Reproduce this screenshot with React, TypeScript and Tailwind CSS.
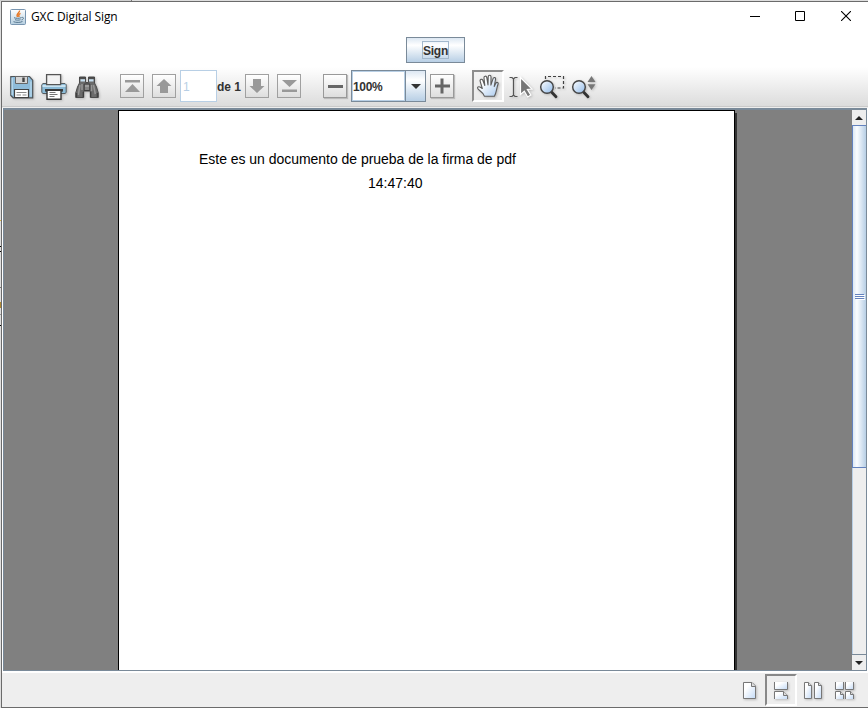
import type { ReactNode } from 'react';

function Icon({ children, size = 24, className = '' }: { children: ReactNode; size?: number; className?: string }) {
  return (
    <svg width={size} height={size} viewBox={`0 0 ${size} ${size}`} className={`block shrink-0 overflow-visible ${className}`} fill="none">
      {children}
    </svg>
  );
}

function SquareButton({ children, active = false, className = '' }: { children: ReactNode; active?: boolean; className?: string }) {
  return (
    <button
      className={`h-6 w-6 shrink-0 border bg-linear-to-b from-white to-[#dedede] ${active ? 'border-[#999] text-[#666] shadow-[1px_1px_1px_#bbb]' : 'border-[#a0a0a0] text-[#999]'} ${className}`}
    >
      <svg width="22" height="22" viewBox="0 0 22 22" className="block" fill="currentColor">{children}</svg>
    </button>
  );
}

function JavaIcon() {
  return (
    <Icon size={16} className="-mt-px">
      <defs>
        <linearGradient id="java" x2="0" y2="1">
          <stop stopColor="#fff" />
          <stop offset="1" stopColor="#b6cfe0" />
        </linearGradient>
      </defs>
      <rect x=".5" y=".5" width="15" height="15" rx="1" fill="url(#java)" stroke="#7895b0" />
      <path d="M9.5 1.5C10 4 5.5 4.5 7.5 8M10.5 4.3c-2.7 1.2-1.7 2-1.5 3.7" stroke="#e77724" strokeWidth="1.4" />
      <path d="M4 8.7c1.5.8 5.8.8 7.2 0M5 10.7c1.5.6 4 .6 5.5 0M3.5 12.7c2 1 7.5 1 9-.3M11.5 8.5c3-.6 2.2 2 0 2.4" stroke="#55768f" />
    </Icon>
  );
}

function SaveIcon() {
  return (
    <Icon className="mt-px drop-shadow-[1px_1px_1px_#bbb]">
      <path d="M.8 1.5h18.7l3.2 3.7v17.6H3.2L.8 20.5Z" fill="#8ebbd9" stroke="#505558" strokeWidth="1.2" />
      <path d="M2.2 3v17M21 6.5v15" stroke="#b9d9ed" strokeWidth="1.3" />
      <path d="M5.5 1.5h12v7h-12Z" fill="#d4d4d4" stroke="#666" />
      <path d="M12.3 2.5h2.4v4.5h-2.4Z" fill="#414141" />
      <path d="M4.5 14.5h14v8h-14Z" fill="#fff" stroke="#414141" strokeWidth="1.2" />
      <path d="M6.5 17.5h10M6.5 20h4.5m1.5 0h4" stroke="#888" />
    </Icon>
  );
}

function PrintIcon() {
  return (
    <Icon size={26} className="mt-px drop-shadow-[1px_1px_1px_#bbb]">
      <path d="M2 9.5h22l1.2 1.2v7.8L24 19.5H2L.8 18.5v-7.8Z" fill="#8bbbd7" stroke="#555b5e" />
      <path d="M1.5 12h23" stroke="#c9e3f1" strokeWidth="2" />
      <path d="M5.6.7h14v10h-14Z" fill="#f2f2f2" stroke="#555" strokeWidth="1.3" />
      <path d="M4 15h18v2.6H4Z" fill="#3c3c3c" />
      <path d="M6 16.3h14v9H6Z" fill="#fff" stroke="#373737" strokeWidth="1.4" />
      <path d="M8.5 18.5h6M8.5 20.5h8M8.5 22.5h5" stroke="#777" />
    </Icon>
  );
}

function BinocularsIcon() {
  return (
    <Icon className="mt-px drop-shadow-[1px_1px_1px_#bbb]">
      <path d="M4.5 2h6v5.5h3V2h6v6l2 4 1.8 6v4.5h-8V16H8.7v6.5h-8V18l1.8-6 2-4Z" fill="#6b6b6b" stroke="#4b4b4b" />
      <path d="M4.5 3h6M13.5 3h6" stroke="#444" strokeWidth="1.6" />
      <path d="M5.5 5.3H10M14 5.3h4.5" stroke="#c7dff0" strokeWidth="2.2" />
      <path d="M5 10 3.3 20M7 9v6M18.5 10l1.8 9M16.5 10v6" stroke="#969696" strokeWidth="1.5" />
      <path d="M9.2 9h5.6v6.5H9.2Z" fill="#858585" stroke="#3d3d3d" />
      <path d="M10 11h4" stroke="#b5b5b5" />
      <path d="M1.7 18v4M8.3 17v5M15.7 17v5M22.3 18v4" stroke="#3d3d3d" strokeWidth="1.2" />
    </Icon>
  );
}

function HandIcon() {
  return (
    <Icon className="drop-shadow-[1px_1px_1px_#bbb]">
      <defs>
        <linearGradient id="hand" x2="1" y2="1">
          <stop offset=".3" stopColor="#fff" />
          <stop offset="1" stopColor="#a9caef" />
        </linearGradient>
      </defs>
      <path d="M8.5 22.3c-.8-2.5-3-4.5-5.1-6.1-1.4-1-2.3-2-1.6-3 .9-1.2 2.8 0 4.5 1.3L4.2 7.4C3.6 5.3 6 4.5 6.8 6.3l2 5.2L8 4c-.2-2.2 2.4-2.5 2.8-.4l1.2 7.3.2-8C12.3.7 15 .8 15 3l-.1 8.1L17 4.8c.7-2 3-1.4 2.5.7l-1.3 7 1.6-3.2c1-1.7 2.9-.8 2.2 1-1.5 4-1.5 8.4-3.6 12Z" fill="url(#hand)" stroke="#5c5c5c" strokeWidth="1.1" strokeLinejoin="round" />
    </Icon>
  );
}

function SelectIcon() {
  return (
    <Icon className="mt-px drop-shadow-[1px_1px_1px_#bbb]">
      <path d="M.5 2.5H3L4.5 4 6 2.5h2.5M4.5 4v16M.5 21.5H3L4.5 20 6 21.5h2.5" stroke="#555" strokeWidth="1.2" />
      <path d="M11.5 2.5 23 14l-4.6.4 3.5 5.7-3.2 1.9-3.4-5.8-3.8 3.2Z" fill="#777" stroke="#fff" strokeWidth="1.2" />
    </Icon>
  );
}

function ZoomIcon({ dynamic = false }: { dynamic?: boolean }) {
  return (
    <Icon className="mt-px drop-shadow-[1px_1px_1px_#bbb]">
      <defs>
        <linearGradient id="lens" x2="1" y2="1">
          <stop stopColor="#fff" />
          <stop offset="1" stopColor="#91bbea" />
        </linearGradient>
      </defs>
      {dynamic ? (
        <path d="m15.5 7 4-6 4 6ZM15.5 9.2l4 5.8 4-5.8Z" fill="#777" />
      ) : (
        <path d="M5.5 4V1.5h18v11.5H15" stroke="#414141" strokeWidth="1.2" strokeDasharray="3 2" />
      )}
      <path d="m11.5 17 4.5 4.8" stroke="#333" strokeWidth="2.8" strokeLinecap="round" />
      <circle cx="7" cy="12" r="6.3" fill="url(#lens)" stroke="#444" strokeWidth="1.4" />
    </Icon>
  );
}

function Sheet({ d, fold }: { d: string; fold?: string }) {
  return (
    <>
      <path d={d} fill="url(#sheet)" stroke="#777" />
      {fold && <path d={fold} fill="#ddd" stroke="#777" />}
    </>
  );
}

function PageIcon({ kind }: { kind: 'single' | 'column' | 'facing' | 'grid' }) {
  return (
    <Icon size={20} className="mt-0.5 drop-shadow-[1px_1px_1px_#bbb]">
      <defs>
        <linearGradient id="sheet" x2="1" y2="1">
          <stop offset=".3" stopColor="#fff" />
          <stop offset="1" stopColor="#c3daf6" />
        </linearGradient>
      </defs>
      {kind === 'single' && <Sheet d="M4.5 1.5h8.5l3.5 3.5v12.5h-12Z" fold="M12.5 1.5V5.5h4" />}
      {kind === 'column' && (
        <>
          <Sheet d="M3.5 1v7.5h13V1" />
          <Sheet d="M3.5 18v-7.5h9l4 4V18" fold="M12.5 10.5v4h4" />
        </>
      )}
      {kind === 'facing' && (
        <>
          <Sheet d="M1.5 1.5h4l3 3v13h-7Z" fold="M5.5 1.5v3h3" />
          <Sheet d="M11.5 1.5h4l3 3v13h-7Z" fold="M15.5 1.5v3h3" />
        </>
      )}
      {kind === 'grid' && (
        <>
          <Sheet d="M.5 1v7.5h8V1" />
          <Sheet d="M10.5 1v7.5h8V1" />
          <Sheet d="M.5 18v-7.5h5l3 3V18" fold="M5.5 10.5v3h3" />
          <Sheet d="M10.5 18v-7.5h5l3 3V18" fold="M15.5 10.5v3h3" />
        </>
      )}
    </Icon>
  );
}

function TitleBar() {
  return (
    <header className="flex h-[30px] shrink-0 items-center bg-white pl-2 pr-[17px]">
      <JavaIcon />
      <h1 className="ml-[5px] whitespace-nowrap font-['Open_Sans',sans-serif] text-[12px] leading-4 tracking-[-0.1px] text-black">GXC Digital Sign</h1>
      <div className="mb-0.5 ml-auto flex items-center text-black">
        <svg width="10" height="10" className="block"><path d="M0 5.5h10" stroke="currentColor" /></svg>
        <svg width="10" height="10" className="ml-[35px] block"><path d="M.5.5h9v9h-9Z" fill="none" stroke="currentColor" /></svg>
        <svg width="10" height="10" className="ml-9 block"><path d="m0 0 10 10M10 0 0 10" stroke="currentColor" strokeWidth="1.1" /></svg>
      </div>
    </header>
  );
}

function Toolbar() {
  return (
    <div className="flex h-[39px] shrink-0 items-center bg-linear-to-b from-white to-[#dcdcdc] pb-px pl-2 font-['Liberation_Sans',Arial,sans-serif] text-[12px] font-bold text-[#333]">
      <SaveIcon />
      <div className="ml-[7px]"><PrintIcon /></div>
      <div className="ml-2"><BinocularsIcon /></div>
      <SquareButton className="ml-[21px]"><path d="M4 5h15v2.5H4ZM11.5 9l7.5 8H4Z" /></SquareButton>
      <SquareButton className="ml-2"><path d="m11 4 7.5 7H15v7H7v-7H3.5Z" /></SquareButton>
      <div className="ml-1 flex h-8 w-[37px] shrink-0 items-center border border-[#b8cfe5] bg-white pl-0.5 pt-0.5 font-normal text-[#b8cfe5]">1</div>
      <span className="w-7 whitespace-nowrap pt-0.5">de 1</span>
      <SquareButton><path d="m11 18 7.5-7H15V4H7v7H3.5Z" /></SquareButton>
      <SquareButton className="ml-2"><path d="M4 5h15l-7.5 7ZM4 14.5h15V17H4Z" /></SquareButton>
      <SquareButton active className="ml-[22px]"><path d="M4 10h15v3H4Z" /></SquareButton>
      <div className="ml-1 flex h-8 w-[75px] shrink-0 border border-[#7a8a99] bg-white">
        <span className="flex flex-1 items-center border border-[#b8cfe5] pt-0.5 tracking-[-0.3px]">100%</span>
        <span className="flex w-5 items-center justify-center border-l border-[#7a8a99] bg-linear-to-b from-[#dde8f3] via-white via-30% to-[#b8cfe5]">
          <svg width="10" height="5" className="mt-px block"><path d="M0 0h10L5 5Z" fill="#333" /></svg>
        </span>
      </div>
      <SquareButton active className="ml-1"><path d="M9.5 3.5h3v6h6.5v3h-6.5v6h-3v-6H4v-3h5.5Z" /></SquareButton>
      <div className="ml-[18px] flex size-8 shrink-0 items-center justify-center border-2 border-b-white border-l-[#8e8e8e] border-r-white border-t-[#8e8e8e] bg-[#eeeeee]/60"><HandIcon /></div>
      <div className="ml-[5px]"><SelectIcon /></div>
      <div className="ml-[7px]"><ZoomIcon /></div>
      <div className="ml-2"><ZoomIcon dynamic /></div>
    </div>
  );
}

function ScrollArrow({ down = false }: { down?: boolean }) {
  return (
    <button className="flex h-[15px] w-full shrink-0 items-center justify-center bg-[#eee]">
      <svg width="8" height="4" className="block"><path d={down ? 'M0 0h8L4 4Z' : 'M0 4h8L4 0Z'} fill="#222" /></svg>
    </button>
  );
}

function ScrollBar() {
  return (
    <aside className="flex w-[15px] shrink-0 flex-col border-r border-[#7a8a99] bg-[#eee]">
      <ScrollArrow />
      <div className="flex min-h-0 flex-1 flex-col border-l border-[#b8cfe5]">
        <div className="-ml-px flex h-[343px] shrink-0 items-center justify-center border border-r-0 border-[#6382bf] bg-linear-to-r from-[#dce8f4] via-[#fafcff] via-30% to-[#b8cfe5]">
          <div className="flex flex-col gap-px">
            <i className="h-px w-[9px] bg-[#6382bf] shadow-[1px_1px_0_white]" />
            <i className="h-px w-[9px] bg-[#6382bf] shadow-[1px_1px_0_white]" />
            <i className="h-px w-[9px] bg-[#6382bf] shadow-[1px_1px_0_white]" />
          </div>
        </div>
      </div>
      <div className="border-t border-[#7a8a99]"><ScrollArrow down /></div>
    </aside>
  );
}

/* Sliver of the desktop that stays visible beside the window. */
function DesktopEdge() {
  return (
    <div className="flex w-px shrink-0 flex-col pt-[219px]">
      <i className="h-px bg-[#d8b43c]" />
      <i className="mt-[25px] h-px bg-black" />
      <i className="mt-1 h-px bg-black" />
      <i className="mt-[35px] h-px bg-[#777]" />
      <i className="mt-[14px] h-1.5 bg-[#b08a35]" />
      <i className="mt-[6px] h-px bg-[#999]" />
      <i className="mt-[10px] h-px bg-black" />
    </div>
  );
}

export default function App() {
  return (
    <div className="flex h-[708px] w-[868px] flex-col overflow-hidden bg-[#dedede]">
      <div className="flex h-px shrink-0">
        <i className="w-[131px] bg-[#cfcfcf]" />
        <i className="w-px bg-[#777]" />
      </div>
      <div className="flex min-h-0 flex-1">
        <DesktopEdge />
        <main className="flex min-w-0 flex-1 flex-col border-b border-l border-t border-[#6b6b6b] bg-white">
          <TitleBar />
          <div className="flex h-[35px] shrink-0 items-start pl-[404px] pt-[5px]">
            <button className="flex h-[26px] w-[59px] items-center justify-center border border-[#7a8a99] bg-linear-to-b from-[#dce7f2] via-white via-30% to-[#b8cfe5] font-['Liberation_Sans',Arial,sans-serif] text-[12px] font-bold leading-4 text-[#333]">
              <span className="flex h-[18px] w-[27px] items-center justify-center border border-[#a3b8cc] pt-0.5 tracking-[-0.2px]">Sign</span>
            </button>
          </div>
          <Toolbar />
          <div className="h-0.5 shrink-0 border-t border-[#c9c9c9] bg-[#eee]" />
          <div className="ml-px mr-px flex h-[563px] shrink-0 border-b border-l border-t-2 border-[#7a8a99] bg-[#808080]">
            <div className="flex min-w-0 flex-1 overflow-hidden pl-[114px]">
              <article className="h-full w-[617px] shrink-0 border-x border-t border-black bg-white pl-20 pt-[38px] font-['Liberation_Sans',Arial,sans-serif] text-[14px] leading-5 text-black shadow-[2px_3px_0_#333]">
                <p className="whitespace-nowrap tracking-[-0.03px]">Este es un documento de prueba de la firma de pdf</p>
                <p className="ml-[169px] mt-1">14:47:40</p>
              </article>
            </div>
            <ScrollBar />
          </div>
          <footer className="mt-0.5 flex min-h-0 flex-1 items-center bg-[#eee] pl-[737px]">
            <PageIcon kind="single" />
            <div className="ml-[6px] flex size-8 items-center justify-center border-2 border-b-white border-l-[#888] border-r-white border-t-[#888]"><PageIcon kind="column" /></div>
            <div className="ml-[6px]"><PageIcon kind="facing" /></div>
            <div className="ml-3"><PageIcon kind="grid" /></div>
          </footer>
        </main>
      </div>
    </div>
  );
}
